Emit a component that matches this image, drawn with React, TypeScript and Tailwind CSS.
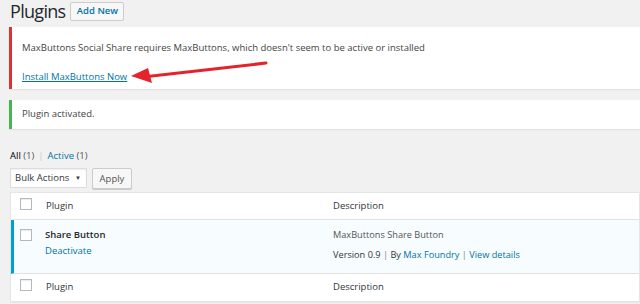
import { ReactNode } from "react";

const Checkbox = () => (
  <span className="inline-block h-[12px] w-[12px] border border-[#b4b9be] bg-white shadow-[inset_0_1px_1px_rgba(0,0,0,0.08)]" />
);

function Row({
  active,
  plugin,
  desc,
  className,
}: {
  active?: boolean;
  plugin: ReactNode;
  desc: ReactNode;
  className?: string;
}) {
  return (
    <div
      className={`flex border-b border-[#e1e1e1] ${
        active ? "border-l-[3px] border-l-[#00a0d2] bg-[#f7fcfe]" : "border-l-[3px] border-l-transparent"
      } ${className ?? ""}`}
    >
      <div className="w-[30px] shrink-0 pl-[6px]">
        <Checkbox />
      </div>
      <div className="w-[289px] shrink-0">{plugin}</div>
      <div className="flex-1">{desc}</div>
    </div>
  );
}

export default function App() {
  return (
    <div
      className="h-[304px] w-[640px] overflow-hidden bg-[#f1f1f1] text-[9.5px] text-[#444]"
      style={{ fontFamily: '"Open Sans", "Noto Sans", sans-serif' }}
    >
      <div className="pl-[9px]">
        {/* heading */}
        <div className="flex h-[22px] items-center">
          <h1 className="ml-[1px] text-[18px] font-normal leading-[22px] tracking-[-0.7px] text-[#23282d]">
            Plugins
          </h1>
          <button className="ml-[5px] h-[19px] w-[54px] rounded-[2px] border border-[#ccc] bg-[#f7f7f7] text-[9.5px] font-semibold leading-none text-[#0073aa]">
            Add New
          </button>
        </div>

        {/* error notice */}
        <div className="relative mt-[5px] h-[62px] border-l-[3px] border-[#dc3232] bg-white pl-[10px] pt-[15px] shadow-[0_1px_1px_rgba(0,0,0,0.06)]">
          <p className="leading-[12px] text-[#444]">
            MaxButtons Social Share requires MaxButtons, which doesn't seem to be active or installed
          </p>
          <a className="mt-[17px] block leading-[12px] text-[#0073aa] underline underline-offset-1">
            Install MaxButtons Now
          </a>
          <svg
            className="absolute left-[101px] top-[32px]"
            width="160"
            height="30"
            viewBox="0 0 160 30"
          >
            <line x1="153" y1="4" x2="30" y2="18" stroke="#e3242b" strokeWidth="3" strokeLinecap="round" />
            <polygon points="18,17 35,9 39,24" fill="#e3242b" />
          </svg>
        </div>

        {/* success notice */}
        <div className="mt-[11px] flex h-[29px] items-center border-l-[3px] border-[#46b450] bg-white pl-[10px] shadow-[0_1px_1px_rgba(0,0,0,0.06)]">
          <p className="text-[#444]">Plugin activated.</p>
        </div>

        {/* views */}
        <div className="ml-[1px] mt-[21px] flex items-center gap-[4px] leading-[12px]">
          <span className="text-[#000]">
            All <span className="text-[#555]">(1)</span>
          </span>
          <span className="text-[#ccc]">|</span>
          <span className="text-[#0073aa]">
            Active <span className="text-[#555]">(1)</span>
          </span>
        </div>

        {/* bulk actions */}
        <div className="ml-[1px] mt-[6px] flex gap-[5px]">
          <div className="flex h-[20px] w-[77px] items-center justify-between border border-[#ddd] bg-white pl-[4px] pr-[5px] text-[#32373c] shadow-[inset_0_1px_2px_rgba(0,0,0,0.07)]">
            <span>Bulk Actions</span>
            <span className="text-[6px]">▼</span>
          </div>
          <button className="h-[21px] w-[40px] rounded-[2px] border border-[#ccc] bg-[#f7f7f7] text-[9.5px] leading-none text-[#555] shadow-[0_1px_0_#ccc]">
            Apply
          </button>
        </div>

        {/* table */}
        <div className="ml-[1px] mt-[3px] border border-[#e5e5e5] bg-white shadow-[0_1px_1px_rgba(0,0,0,0.04)]">
          <Row
            className="h-[27px] items-center"
            plugin={<span className="pl-[2px] text-[#32373c]">Plugin</span>}
            desc={<span className="text-[#32373c]">Description</span>}
          />
          <Row
            active
            className="h-[54px] pt-[9px]"
            plugin={
              <div className="pl-[1px]">
                <div className="font-semibold leading-[12px] text-[#23282d]">Share Button</div>
                <div className="mt-[4px] leading-[12px] text-[#0073aa]">Deactivate</div>
              </div>
            }
            desc={
              <div className="text-[9.2px]">
                <div className="leading-[12px] text-[#555]">MaxButtons Share Button</div>
                <div className="mt-[8px] leading-[12px] text-[#32373c]">
                  Version 0.9 <span className="text-[#82878c]">|</span> By{" "}
                  <span className="text-[#0073aa]">Max Foundry</span>{" "}
                  <span className="text-[#82878c]">|</span>{" "}
                  <span className="text-[#0073aa]">View details</span>
                </div>
              </div>
            }
          />
          <Row
            className="h-[27px] items-center border-b-0"
            plugin={<span className="pl-[2px] text-[#32373c]">Plugin</span>}
            desc={<span className="text-[#32373c]">Description</span>}
          />
        </div>
      </div>
    </div>
  );
}
